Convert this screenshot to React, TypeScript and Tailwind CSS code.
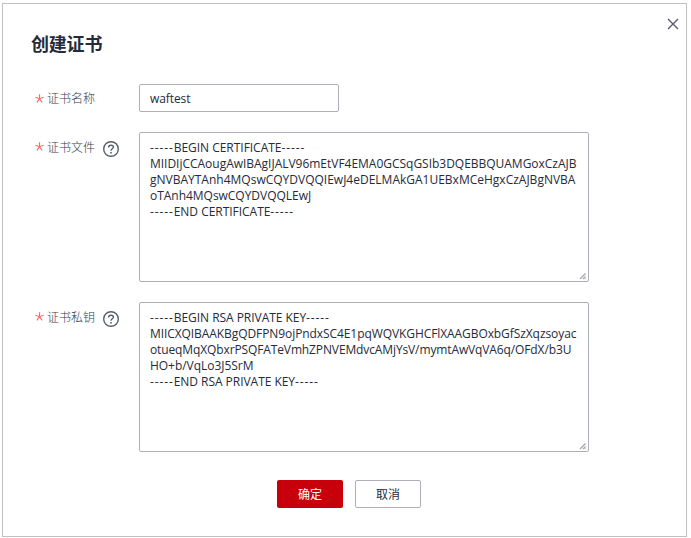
import type { ReactNode } from "react";

type Line = { text: string; tracking: string };

const certificate: Line[] = [
  { text: "-----BEGIN CERTIFICATE-----", tracking: "tracking-[-0.03px]" },
  { text: "MIIDIjCCAougAwIBAgIJALV96mEtVF4EMA0GCSqGSIb3DQEBBQUAMGoxCzAJB", tracking: "tracking-[-0.02px]" },
  { text: "gNVBAYTAnh4MQswCQYDVQQIEwJ4eDELMAkGA1UEBxMCeHgxCzAJBgNVBA", tracking: "tracking-normal" },
  { text: "oTAnh4MQswCQYDVQQLEwJ", tracking: "tracking-[-0.03px]" },
  { text: "-----END CERTIFICATE-----", tracking: "tracking-[-0.03px]" },
];

const privateKey: Line[] = [
  { text: "-----BEGIN RSA PRIVATE KEY-----", tracking: "tracking-[-0.04px]" },
  { text: "MIICXQIBAAKBgQDFPN9ojPndxSC4E1pqWQVKGHCFlXAAGBOxbGfSzXqzsoyac", tracking: "tracking-[-0.08px]" },
  { text: "otueqMqXQbxrPSQFATeVmhZPNVEMdvcAMjYsV/mymtAwVqVA6q/OFdX/b3U", tracking: "tracking-[-0.12px]" },
  { text: "HO+b/VqLo3J5SrM", tracking: "tracking-[-0.04px]" },
  { text: "-----END RSA PRIVATE KEY-----", tracking: "tracking-[-0.04px]" },
];

function HelpIcon() {
  return (
    <svg className="ml-[7px] mt-[8px] size-[18px] shrink-0" viewBox="0 0 18 18" fill="none" stroke="#575d6c">
      <circle cx="9" cy="9" r="7.3" strokeWidth="1.4" />
      <path d="M6.6 7.4C6.6 6 7.5 5.3 9 5.3s2.4.8 2.4 1.9c0 1.6-2.4 1.6-2.4 3.5" strokeWidth="1.4" />
      <path d="M9 11.9v1.5" strokeWidth="1.6" />
    </svg>
  );
}

function Field({ label, help, children }: { label: string; help?: boolean; children: ReactNode }) {
  return (
    <div className="flex items-start">
      <div className="flex w-[104px] shrink-0 items-start">
        <svg className="mt-[10px] size-[9px] shrink-0" viewBox="0 0 9 9" stroke="#f66f6a" strokeWidth="1.2">
          <path d="M4.5 .2v4.5M.4 3.3l4.1 1.4 4.1-1.4M1.9 8.3l2.6-3.6L7.1 8.3" fill="none" />
        </svg>
        <span className={`ml-[3px] text-[12px] font-light leading-4 text-[#353b4a] ${help ? "mt-[8px]" : "mt-[7px]"}`}>{label}</span>
        {help && <HelpIcon />}
      </div>
      {children}
    </div>
  );
}

// The dashes of the PEM header and footer are set wider than the letters.
function PemLine({ text, tracking }: Line) {
  return (
    <div className="whitespace-nowrap">
      {text.split(/(-----)/).map((part, i) => (
        <span key={i} className={part === "-----" ? "tracking-[0.88px]" : tracking}>{part}</span>
      ))}
    </div>
  );
}

function TextBox({ lines }: { lines: Line[] }) {
  return (
    <div className="flex h-[150px] w-[450px] items-end justify-between rounded-[2px] border border-[#adb0b8] py-[7px] pl-[10px]">
      <div className="w-[428px] shrink-0 self-start text-[12px] leading-4">
        {lines.map((line) => (
          <PemLine key={line.text} {...line} />
        ))}
      </div>
      <svg className="-mb-[6px] mr-[1px] size-[8px] shrink-0" viewBox="0 0 8 8" stroke="#a5a5aa" strokeWidth="1.2">
        <path d="M1 7L6.5 1.5M4 7l2.5-2.5M6 7l.5-.5" />
      </svg>
    </div>
  );
}

export default function App() {
  return (
    <div className="h-[538px] w-[691px] bg-white pl-[2px] pt-[3px] font-['Open_Sans','Noto_Sans_CJK_SC',sans-serif] text-[#252b3a]">
      <div className="flex h-[534px] w-[685px] flex-col border border-[#c0c0c0]">
        <div className="flex h-[80px] justify-between">
          <h1 className="ml-[28px] mt-[28px] text-[18px] font-bold leading-6 tracking-[-0.2px]">创建证书</h1>
          <button type="button" aria-label="关闭" className="mr-[7px] mt-[14px] size-[12px]">
            <svg className="size-[12px]" viewBox="0 0 12 12" stroke="#575d6c" strokeWidth="1.4">
              <path d="M1 1l10 10M11 1L1 11" />
            </svg>
          </button>
        </div>
        <div className="ml-[32px] flex flex-col gap-5">
          <Field label="证书名称">
            <input
              defaultValue="waftest"
              className="h-[28px] w-[200px] rounded-[2px] border border-[#adb0b8] px-[10px] text-[12px] leading-4 tracking-[-0.1px] outline-none"
            />
          </Field>
          <Field label="证书文件" help>
            <TextBox lines={certificate} />
          </Field>
          <Field label="证书私钥" help>
            <TextBox lines={privateKey} />
          </Field>
        </div>
        <div className="ml-[274px] mt-[28px] flex gap-3 text-[12px] leading-4">
          <button type="button" className="h-[28px] w-[66px] rounded-[2px] bg-[#c7000b] pt-[2px] text-white">确定</button>
          <button type="button" className="h-[28px] w-[66px] rounded-[2px] border border-[#adb0b8] pt-[2px]">取消</button>
        </div>
      </div>
    </div>
  );
}
